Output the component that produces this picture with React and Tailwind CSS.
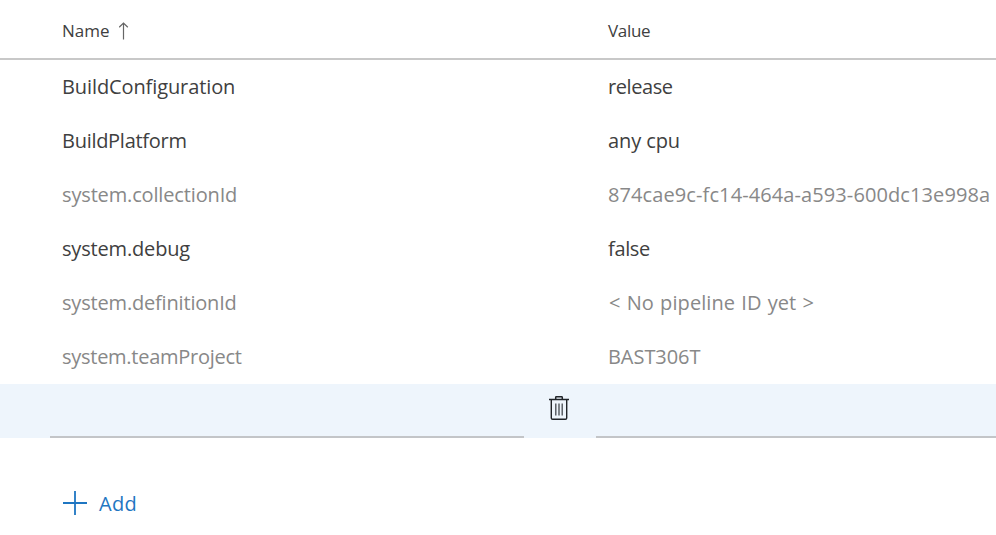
const rows = [
  { name: "BuildConfiguration", nameTracking: "tracking-[-0.1px]", value: "release", valueTracking: "tracking-[-0.42px]" },
  { name: "BuildPlatform", nameTracking: "tracking-[-0.28px]", value: "any cpu", valueTracking: "tracking-[-0.1px]" },
  { name: "system.collectionId", nameTracking: "tracking-[-0.15px]", value: "874cae9c-fc14-464a-a593-600dc13e998a", valueTracking: "tracking-[0.1px]", muted: true },
  { name: "system.debug", nameTracking: "tracking-[-0.17px]", value: "false", valueTracking: "tracking-[-0.35px]" },
  { name: "system.definitionId", nameTracking: "tracking-[-0.18px]", value: "< No pipeline ID yet >", valueTracking: "tracking-[0.08px] [word-spacing:0.9px] pl-px", muted: true },
  { name: "system.teamProject", nameTracking: "tracking-[-0.27px]", value: "BAST306T", valueTracking: "tracking-[-0.05px]", muted: true },
];

function SortArrow() {
  return (
    <svg className="ml-[9px] h-[18px] w-[10px]" viewBox="0 0 10 18" fill="none" stroke="#666" strokeWidth="1.2">
      <path d="M4.5 17.5V1M0.2 5.2L4.5 1l4.3 4.2" />
    </svg>
  );
}

function TrashIcon() {
  return (
    <svg className="h-[26px] w-[20px]" viewBox="0 0 20 26" fill="none" stroke="#202428">
      <path d="M0 4.5h20M6.7 4.5V2.4q0-.7.7-.7h5.2q.7 0 .7.7v2.1" strokeWidth="1.5" />
      <path d="M2.3 4.5v18.4q0 1.3 1.3 1.3h12.8q1.3 0 1.3-1.3V4.5" strokeWidth="1.4" />
      <path d="M6.8 8.5v12M10 8.5v12M13.2 8.5v12" strokeWidth="1.3" stroke="#454a50" />
    </svg>
  );
}

export default function App() {
  return (
    <div className="h-[535px] w-[996px] overflow-hidden bg-white font-['Open_Sans','Noto_Sans',sans-serif] text-[#404040]">
      <div className="flex h-[60px] border-b-2 border-[#c8c8c8] pl-[62px] text-[17px]">
        <div className="flex h-[61px] w-[546px] items-center">
          <span>Name</span>
          <SortArrow />
        </div>
        <div className="flex h-[61px] items-center tracking-[-0.3px]">Value</div>
      </div>

      {rows.map((row) => (
        <div key={row.name} className={`flex h-[54px] items-center pl-[62px] text-[20px] ${row.muted ? "text-[#888]" : ""}`}>
          <div className={`w-[546px] ${row.nameTracking}`}>{row.name}</div>
          <div className={`whitespace-nowrap ${row.valueTracking}`}>{row.value}</div>
        </div>
      ))}

      <div className="flex h-[54px] bg-[#eef5fc] pl-[50px]">
        <div className="w-[474px] border-b-2 border-[#c3c5c8]" />
        <div className="flex w-[72px] justify-center pt-[11px] pr-[2px]">
          <TrashIcon />
        </div>
        <div className="w-[400px] border-b-2 border-[#c3c5c8]" />
      </div>

      <div className="mt-[51px] flex h-[27px] items-center pl-[63px] text-[20px] text-[#1f76c2]">
        <svg className="h-[24px] w-[24px]" viewBox="0 0 24 24" fill="none" stroke="currentColor" strokeWidth="1.8">
          <path d="M12 0v24M0 12h24" />
        </svg>
        <span className="ml-[12px] pt-[2px] tracking-[0.3px]">Add</span>
      </div>
    </div>
  );
}
